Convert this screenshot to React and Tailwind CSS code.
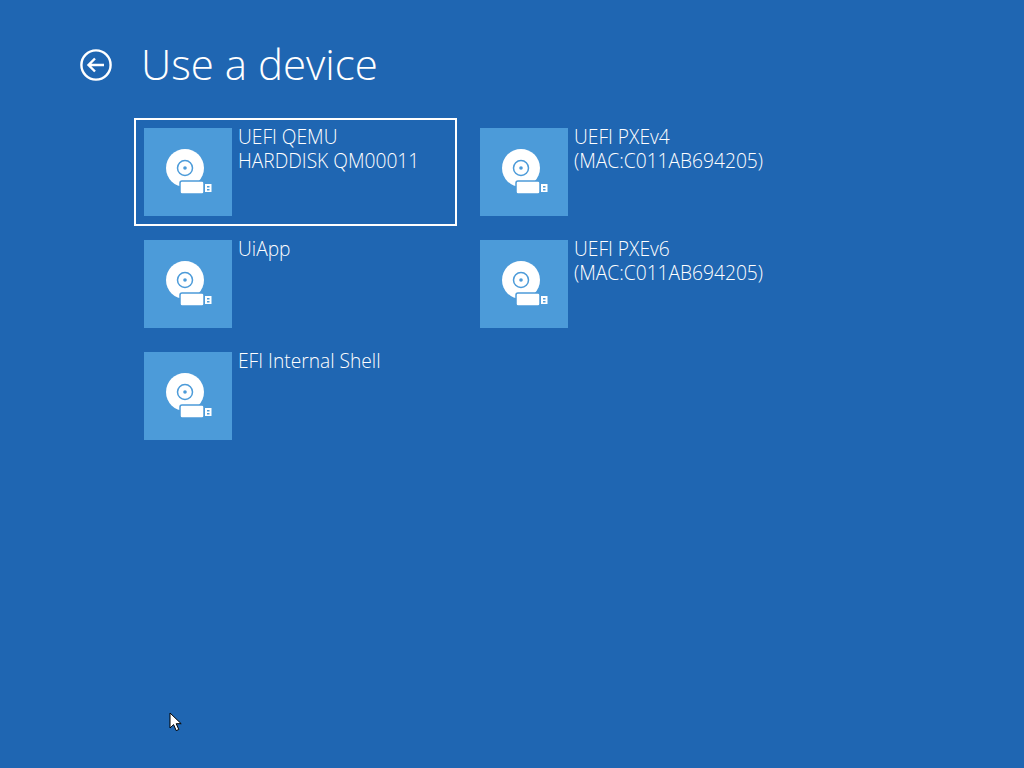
import React from "react";

const DiskIcon = () => (
  <svg width="88" height="88" viewBox="0 0 88 88">
    <circle cx="41" cy="40" r="19" fill="#fff" />
    <circle cx="41" cy="40" r="7.5" fill="none" stroke="#4c9bd9" strokeWidth="1.5" />
    <circle cx="41" cy="40" r="1.8" fill="#4c9bd9" />
    <rect x="36" y="53" width="24" height="13" rx="2" fill="#fff" stroke="#4c9bd9" strokeWidth="1.5" />
    <rect x="61" y="56" width="6.5" height="8" fill="#fff" />
    <rect x="63" y="58" width="2.5" height="1.5" fill="#4c9bd9" />
    <rect x="63" y="61" width="2.5" height="1.5" fill="#4c9bd9" />
  </svg>
);

const Device = ({ lines, selected }) => (
  <div
    className={`flex w-[323px] h-[108px] border-2 ${
      selected ? "border-white" : "border-transparent"
    } pl-2 pt-2`}
  >
    <div className="w-[88px] h-[88px] shrink-0 bg-[#4c9bd9]">
      <DiskIcon />
    </div>
    <div className="pl-[6px] -mt-[3px] text-[19.2px] leading-6 text-white font-light">
      {lines.map((l) => (
        <div key={l} className="whitespace-nowrap">
          {l}
        </div>
      ))}
    </div>
  </div>
);

export default function App() {
  return (
    <div className="relative w-[1024px] h-[768px] overflow-hidden bg-[#1f66b2] font-['Open_Sans','Noto_Sans',sans-serif] text-white">
      <div className="flex items-center h-[118px] pl-20 pt-3">
        <svg width="32" height="32" viewBox="0 0 32 32" fill="none" stroke="#fff" strokeWidth="2.4">
          <circle cx="16" cy="16" r="14.6" />
          <path d="M24 16H9M15 9.5 8.5 16l6.5 6.5" />
        </svg>
        <h1 className="ml-[29px] -mt-[2px] text-[42px] leading-none font-light">Use a device</h1>
      </div>
      <div className="grid grid-flow-col grid-rows-[108px_108px_108px] grid-cols-[323px_323px] gap-x-[13px] gap-y-1 pl-[134px]">
        <Device lines={["UEFI QEMU", "HARDDISK QM00011"]} selected />
        <Device lines={["UiApp"]} />
        <Device lines={["EFI Internal Shell"]} />
        <Device lines={["UEFI PXEv4", "(MAC:C011AB694205)"]} />
        <Device lines={["UEFI PXEv6", "(MAC:C011AB694205)"]} />
      </div>
      <svg className="absolute left-[169px] top-[712px]" width="14" height="21" viewBox="0 0 14 21">
        <path d="M1 1v15l3.6-3.4 2.6 6 2.6-1.1-2.6-5.8h5z" fill="#fff" stroke="#000" strokeWidth="1" />
      </svg>
    </div>
  );
}
